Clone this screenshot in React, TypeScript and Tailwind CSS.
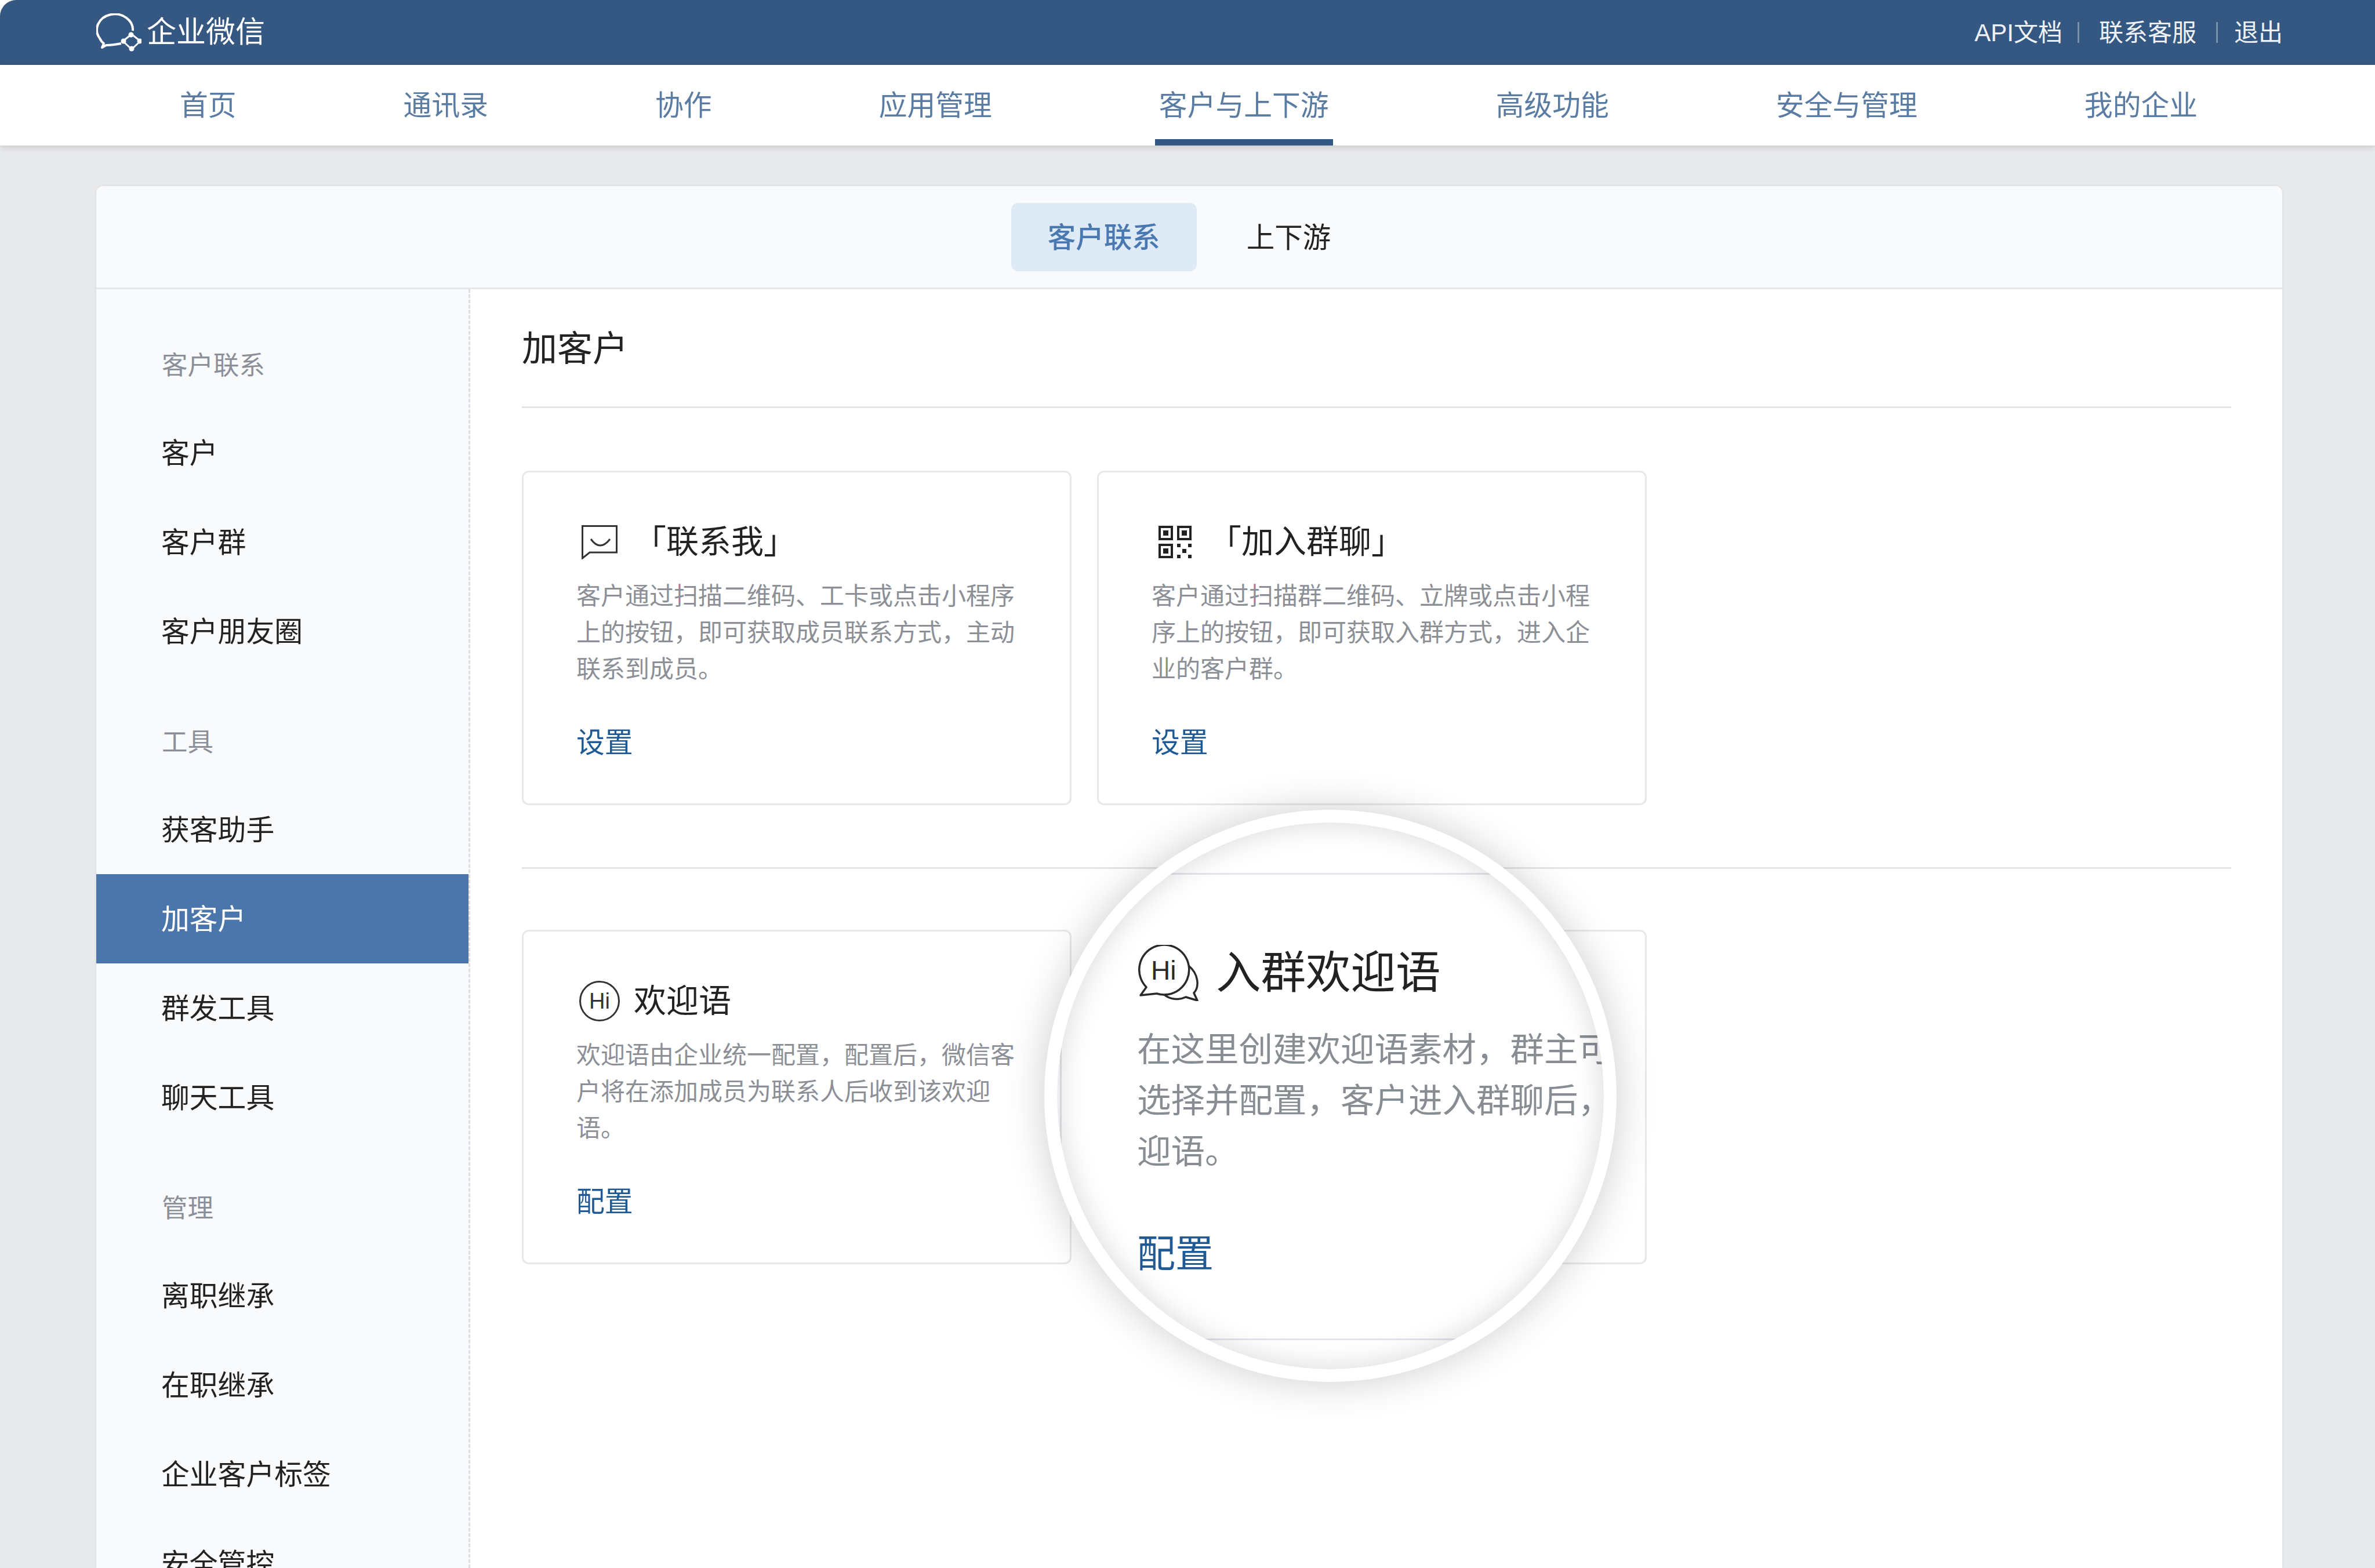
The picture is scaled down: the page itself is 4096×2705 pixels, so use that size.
import React from 'react'

const navItems = ['首页', '通讯录', '协作', '应用管理', '客户与上下游', '高级功能', '安全与管理', '我的企业']

const sideGroups = [
  { label: '客户联系', items: ['客户', '客户群', '客户朋友圈'] },
  { label: '工具', items: ['获客助手', '加客户', '群发工具', '聊天工具'] },
  { label: '管理', items: ['离职继承', '在职继承', '企业客户标签', '安全管控'] },
]

function Logo() {
  return (
    <svg width="78" height="66" viewBox="0 0 78 66" fill="none" stroke="#fff" strokeLinejoin="round">
      <path d="M63 30A31 27 0 1 0 6 43Q8 48 13 52L10 59L17 55Q28 55 43 52" strokeWidth="4" />
      <path d="M61 36L76 48L61 62L46 48Z" strokeWidth="3" />
      <g fill="#fff" stroke="none">
        <circle cx="60" cy="37" r="4.5" />
        <circle cx="75" cy="48" r="4.5" />
        <circle cx="61" cy="61" r="4.5" />
        <circle cx="47" cy="48" r="4.5" />
      </g>
    </svg>
  )
}

function ContactIcon() {
  return (
    <svg width="62" height="59" viewBox="0 0 62 59" fill="none" stroke="#333">
      <path d="M1.5 1.5H60.5V47H14L1.5 57Z" strokeWidth="3" />
      <path d="M16 24Q32 46 49 24" strokeWidth="3" />
    </svg>
  )
}

function QrIcon() {
  return (
    <svg width="57" height="56" viewBox="0 0 57 56" fill="#222">
      <path fillRule="evenodd" d="M0 0H25V25H0ZM4 4V21H21V4Z" />
      <path fillRule="evenodd" d="M32 0H57V25H32ZM36 4V21H53V4Z" />
      <path fillRule="evenodd" d="M0 31H25V56H0ZM4 35V52H21V35Z" />
      <rect x="8" y="8" width="9" height="9" />
      <rect x="40" y="8" width="9" height="9" />
      <rect x="8" y="39" width="9" height="9" />
      <rect x="32" y="31" width="6" height="6" />
      <rect x="51" y="31" width="6" height="6" />
      <rect x="41" y="40" width="7" height="7" />
      <rect x="32" y="50" width="6" height="6" />
      <rect x="51" y="50" width="6" height="6" />
    </svg>
  )
}

function HiIcon() {
  return (
    <div className="w-[70px] h-[70px] rounded-full border-[3px] border-[#333] flex items-center justify-center text-[38px] leading-none text-[#333]">
      Hi
    </div>
  )
}

function HiDoubleIcon() {
  return (
    <div className="relative w-[104px] h-[97px]">
      <svg width="104" height="97" viewBox="0 0 104 97" fill="none" stroke="#2a2a2a" strokeWidth="3.5" strokeLinejoin="round">
        <path d="M14 73A43 43 0 1 1 32 84L4 87Z" />
        <path d="M87 36C104 50 106 72 96 83L102 96L82 90C70 96 54 94 45 86" />
      </svg>
      <span className="absolute left-[22px] top-[24px] text-[46px] leading-[40px] text-[#2a2a2a]">Hi</span>
    </div>
  )
}

function FeatureCard({ icon, iconClass, title, desc, link }: { icon?: React.ReactNode; iconClass?: string; title?: string; desc?: string; link?: string }) {
  return (
    <div className="w-[948px] h-[577px] border-[3px] border-[#e6e8ec] rounded-[12px] bg-white px-[91px] pt-[85px]">
      {title && (
        <>
          <div className="flex h-[70px] items-center">
            <div className={`w-[99px] shrink-0 ${iconClass}`}>{icon}</div>
            <span className="text-[56px] text-[#222] whitespace-nowrap">{title}</span>
          </div>
          <p className="mt-[27px] text-[42px] leading-[63px] text-[#8c8f96]">{desc}</p>
          <a className="block mt-[65px] text-[48.8px] leading-[60px] text-[#1f5a94]">{link}</a>
        </>
      )}
    </div>
  )
}

function Magnifier() {
  return (
    <div className="absolute left-[1801px] top-[1397px] w-[987px] h-[987px] rounded-full bg-white border-[22px] border-white overflow-hidden shadow-[0_0_70px_rgba(0,0,0,0.2)]">
      <div className="ml-[5px] mt-[87px] w-[1326px] h-[806px] border-[3px] border-[#e3e5ea] rounded-[16px] pl-[130px] pr-[132px] pt-[120px]">
        <div className="flex h-[98px] items-center">
          <div className="w-[136px] shrink-0 pl-[2px]">
            <HiDoubleIcon />
          </div>
          <span className="text-[77.5px] text-[#222] whitespace-nowrap">入群欢迎语</span>
        </div>
        <div className="mt-[40px] text-[58.5px] leading-[88px] text-[#888c93] whitespace-nowrap">
          <div>在这里创建欢迎语素材，群主可</div>
          <div>选择并配置，客户进入群聊后，</div>
          <div>迎语。</div>
        </div>
        <a className="block mt-[90px] text-[66px] leading-[84px] text-[#1f5a94]">配置</a>
      </div>
      <div className="absolute inset-0 rounded-full shadow-[inset_0_0_50px_rgba(0,0,0,0.16)]" />
    </div>
  )
}

export default function App() {
  return (
    <div className="relative h-[2705px] overflow-hidden bg-white font-['Liberation_Sans','Noto_Sans_CJK_SC',sans-serif] flex flex-col">
      {/* Top bar */}
      <header className="h-[112px] shrink-0 rounded-tl-[28px] bg-[#355882] flex items-center justify-between pl-[166px] pr-[159px] text-white">
        <div className="flex items-center gap-[9px]">
          <Logo />
          <span className="text-[51px]">企业微信</span>
        </div>
        <div className="flex items-center text-[42px] text-[#eef2f7]">
          <span>API文档</span>
          <span className="ml-[26px] mr-[34px] w-[3px] h-[36px] bg-white/35" />
          <span>联系客服</span>
          <span className="ml-[34px] mr-[28px] w-[3px] h-[36px] bg-white/35" />
          <span>退出</span>
        </div>
      </header>

      {/* Main nav */}
      <nav className="relative z-10 h-[139px] shrink-0 bg-white flex gap-[288px] pl-[310px] shadow-[0_3px_10px_rgba(0,0,0,0.14)]">
        {navItems.map((item) => (
          <div key={item} className="relative flex items-center pt-[3px] text-[48.8px] text-[#5a7ca3]">
            {item}
            {item === '客户与上下游' && <span className="absolute -left-[7px] -right-[7px] bottom-0 h-[11px] bg-[#355882]" />}
          </div>
        ))}
      </nav>

      <main className="flex-1 min-h-0 bg-[#e8e9eb] pt-[70px] pl-[166px] pr-[160px]">
        <div className="h-full rounded-t-[12px] bg-white flex flex-col shadow-[0_0_5px_rgba(0,0,0,0.08)]">
          {/* Tabs */}
          <div className="h-[178px] shrink-0 rounded-t-[12px] bg-[#f9fafc] border-b-[3px] border-[#e4e6ea] flex items-center justify-center gap-[23px] text-[48.5px]">
            <div className="h-[118px] px-[63px] rounded-[12px] bg-[#dfeaf7] text-[#4a78b0] font-medium flex items-center pt-[3px]">客户联系</div>
            <div className="h-[118px] px-[63px] text-[#222] flex items-center pt-[3px]">上下游</div>
          </div>

          <div className="flex-1 min-h-0 flex">
            {/* Sidebar */}
            <aside className="w-[645px] shrink-0 bg-[#f9fafc] border-r-[3px] border-dashed border-[#dcdee3] pt-[17px]">
              {sideGroups.map((group) => (
                <div key={group.label}>
                  <div className="h-[188px] pt-[78px] pl-[113px] text-[44.5px] leading-[74px] text-[#8a8f99]">{group.label}</div>
                  {group.items.map((item) => (
                    <div
                      key={item}
                      className={
                        item === '加客户'
                          ? 'h-[154px] pl-[112px] pt-[4px] flex items-center text-[48.8px] bg-[#4a76ab] text-white'
                          : 'h-[154px] pl-[112px] pt-[4px] flex items-center text-[48.8px] text-[#222]'
                      }
                    >
                      {item}
                    </div>
                  ))}
                </div>
              ))}
            </aside>

            {/* Content */}
            <section className="flex-1 pl-[89px] pr-[88px]">
              <div className="h-[205px] pt-[5px] border-b-[3px] border-[#e3e5e9] flex items-center text-[61px] text-[#222]">加客户</div>
              <div className="flex gap-[44px] pt-[108px] pb-[107px] border-b-[3px] border-[#e3e5e9]">
                <FeatureCard
                  icon={<ContactIcon />}
                  iconClass="pl-[9px]"
                  title="「联系我」"
                  desc="客户通过扫描二维码、工卡或点击小程序上的按钮，即可获取成员联系方式，主动联系到成员。"
                  link="设置"
                />
                <FeatureCard
                  icon={<QrIcon />}
                  iconClass="pl-[12px]"
                  title="「加入群聊」"
                  desc="客户通过扫描群二维码、立牌或点击小程序上的按钮，即可获取入群方式，进入企业的客户群。"
                  link="设置"
                />
              </div>
              <div className="flex gap-[44px] pt-[105px]">
                <FeatureCard
                  icon={<HiIcon />}
                  iconClass="pl-[5px]"
                  title="欢迎语"
                  desc="欢迎语由企业统一配置，配置后，微信客户将在添加成员为联系人后收到该欢迎语。"
                  link="配置"
                />
                <FeatureCard />
              </div>
            </section>
          </div>
        </div>
      </main>

      <Magnifier />
    </div>
  )
}
